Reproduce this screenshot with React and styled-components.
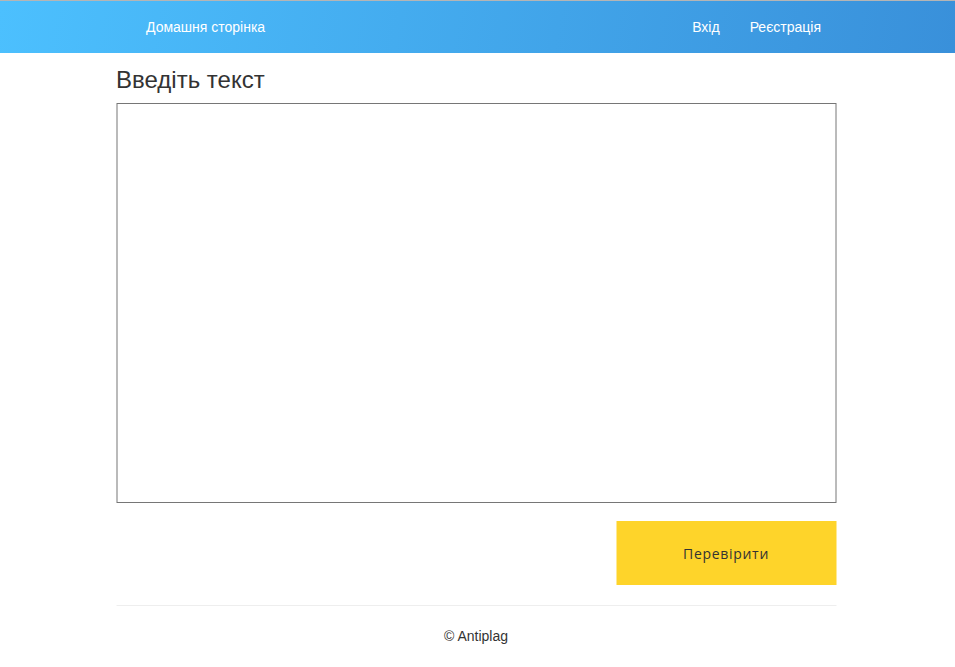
import React from "react";
import styled, { createGlobalStyle } from "styled-components";

const GlobalStyle = createGlobalStyle`
  body {
    margin: 0;
    font-family: "Liberation Sans", Arial, sans-serif;
    font-size: 14px;
    color: #333;
    background: #fff;
    border-top: 1px solid #b5b5b5;
  }
`;

const NavBar = styled.nav`
  height: 52px;
  background: linear-gradient(100deg, #4cc0fe 0%, #3990da 100%);
  display: flex;
  align-items: center;
`;

const NavInner = styled.div`
  width: 720px;
  margin: 0 auto;
  display: flex;
  align-items: center;
  justify-content: space-between;
  transform: translateX(-1.5px);
`;

const Brand = styled.a`
  color: #fff;
  font-size: 14px;
  padding: 0 15px 0 30px;
  text-decoration: none;
  line-height: 52px;
`;

const NavLinks = styled.div`
  display: flex;
`;

const NavLink = styled.a`
  color: #fff;
  font-size: 14px;
  padding: 0 15px;
  text-decoration: none;
  line-height: 52px;
`;

const Container = styled.main`
  width: 720px;
  margin: 0 auto;
  display: flex;
  flex-direction: column;
  transform: translateX(-1.5px);
`;

const Title = styled.h2`
  margin: 13px 0 10px;
  font-size: 24px;
  font-weight: 400;
  line-height: 27px;
  color: #333;
`;

const TextArea = styled.textarea`
  box-sizing: border-box;
  width: 720px;
  height: 400px;
  border: 1px solid #767676;
  resize: none;
  margin: 0;
  padding: 2px;
  outline: none;
  font-family: "Liberation Mono", monospace;
`;

const Actions = styled.div`
  display: flex;
  justify-content: flex-end;
  margin-top: 18px;
`;

const CheckButton = styled.button`
  width: 220px;
  height: 64px;
  border: none;
  background: #fed42a;
  color: #333;
  font-family: "Open Sans", "Noto Sans", sans-serif;
  font-size: 14px;
  letter-spacing: 0.7px;
  cursor: pointer;
`;

const Divider = styled.hr`
  border: none;
  border-top: 1px solid #eee;
  margin: 20px 0 0;
`;

const Footer = styled.footer`
  text-align: center;
  font-size: 14px;
  color: #333;
  padding-top: 22px;
`;

export default function App() {
  return (
    <>
      <GlobalStyle />
      <NavBar>
        <NavInner>
          <Brand href="#">Домашня сторінка</Brand>
          <NavLinks>
            <NavLink href="#">Вхід</NavLink>
            <NavLink href="#">Реєстрація</NavLink>
          </NavLinks>
        </NavInner>
      </NavBar>
      <Container>
        <Title>Введіть текст</Title>
        <TextArea />
        <Actions>
          <CheckButton>Перевірити</CheckButton>
        </Actions>
        <Divider />
        <Footer>© Antiplag</Footer>
      </Container>
    </>
  );
}
